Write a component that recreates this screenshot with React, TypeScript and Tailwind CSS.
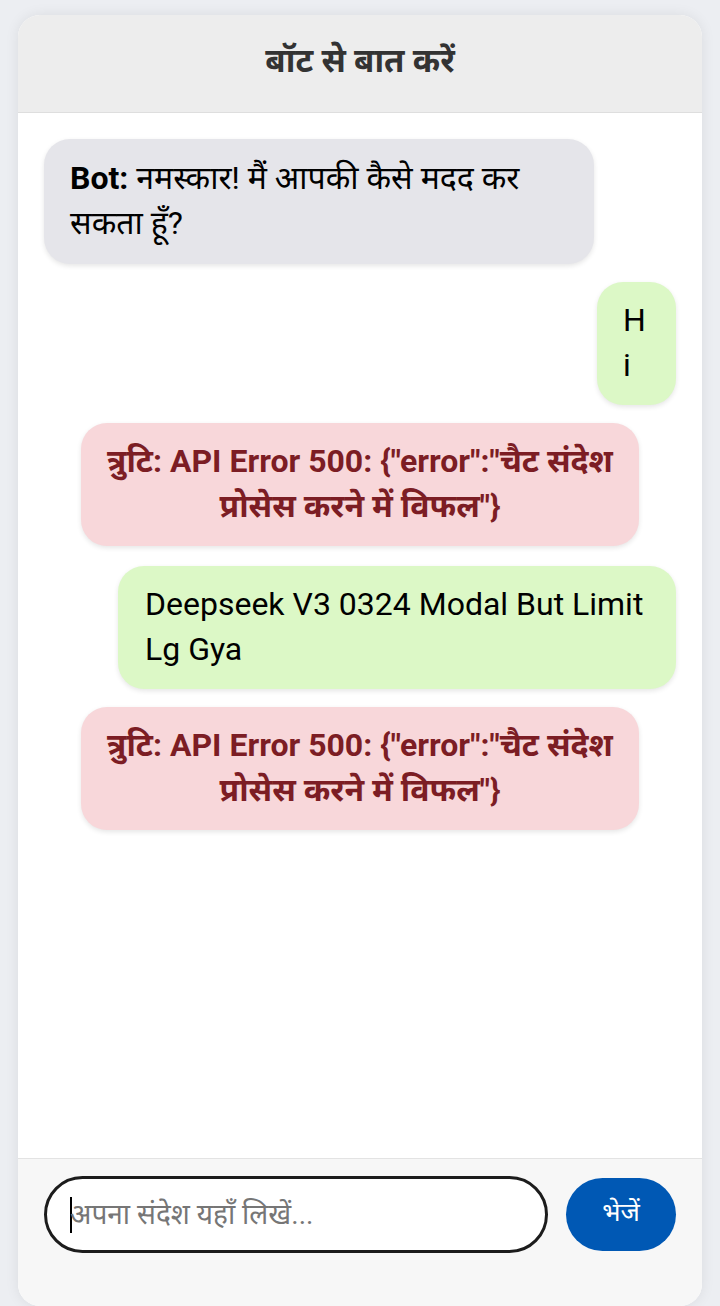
import React from "react";

const font = { fontFamily: 'Roboto, "Noto Sans", "Noto Sans Devanagari", "DejaVu Sans", sans-serif' };

export default function App() {
  return (
    <div className="min-h-[1306px] w-[720px] bg-[#eceef2] pt-[15px] px-[18px]" style={font}>
      <div className="flex h-[1291px] flex-col overflow-hidden rounded-[22px] bg-white shadow-[0_0_14px_rgba(0,0,0,0.08)]">
        <div className="flex h-[98px] shrink-0 items-center justify-center border-b border-[#dedede] bg-[#ededed]">
          <h1 className="text-[33px] font-bold text-[#333333] leading-none pb-[6px]">बॉट से बात करें</h1>
        </div>
        <div className="flex flex-1 flex-col px-[26px] pt-[26px]">
          <div className="self-start w-[550px] rounded-[26px] bg-[#e5e5ea] px-[26px] pt-[17px] pb-[18px] text-[32px] leading-[45px] text-black shadow-[0_2px_5px_rgba(0,0,0,0.1)]">
            <span className="font-bold">Bot:</span> नमस्कार! मैं आपकी कैसे मदद कर सकता हूँ?
          </div>
          <div className="mt-[18px] self-end w-[79px] break-all rounded-[26px] bg-[#dcf8c6] px-[26px] pt-[16px] pb-[17px] text-[32px] leading-[45px] text-black shadow-[0_2px_5px_rgba(0,0,0,0.1)]">
            Hi
          </div>
          <div className="mt-[18px] self-center w-[558px] rounded-[26px] bg-[#f8d7da] px-[22px] pt-[16px] pb-[17px] text-center text-[32px] font-bold leading-[45px] text-[#7c1d24] shadow-[0_2px_5px_rgba(0,0,0,0.1)]">
            त्रुटि: API Error 500: {'{"error":"चैट संदेश प्रोसेस करने में विफल"}'}
          </div>
          <div className="mt-[20px] self-end w-[558px] rounded-[26px] bg-[#dcf8c6] px-[27px] pt-[16px] pb-[17px] text-[32px] leading-[45px] text-black shadow-[0_2px_5px_rgba(0,0,0,0.1)]">
            Deepseek V3 0324 Modal But Limit Lg Gya
          </div>
          <div className="mt-[18px] self-center w-[558px] rounded-[26px] bg-[#f8d7da] px-[22px] pt-[16px] pb-[17px] text-center text-[32px] font-bold leading-[45px] text-[#7c1d24] shadow-[0_2px_5px_rgba(0,0,0,0.1)]">
            त्रुटि: API Error 500: {'{"error":"चैट संदेश प्रोसेस करने में विफल"}'}
          </div>
        </div>
        <div className="flex h-[148px] shrink-0 items-start gap-[18px] border-t border-[#e3e3e3] bg-[#f7f7f7] px-[26px] pt-[17px]">
          <div className="flex h-[77px] flex-1 items-center rounded-full border-[3px] border-[#1c1c1c] bg-white pl-[23px]">
            <span className="h-[36px] w-[2px] shrink-0 bg-black" />
            <span className="-ml-[2px] text-[28px] text-[#767676]">अपना संदेश यहाँ लिखें...</span>
          </div>
          <button className="mt-[2px] flex h-[73px] w-[110px] items-center justify-center rounded-full bg-[#0058b4] pb-[4px] text-[26px] text-white">
            भेजें
          </button>
        </div>
      </div>
    </div>
  );
}
